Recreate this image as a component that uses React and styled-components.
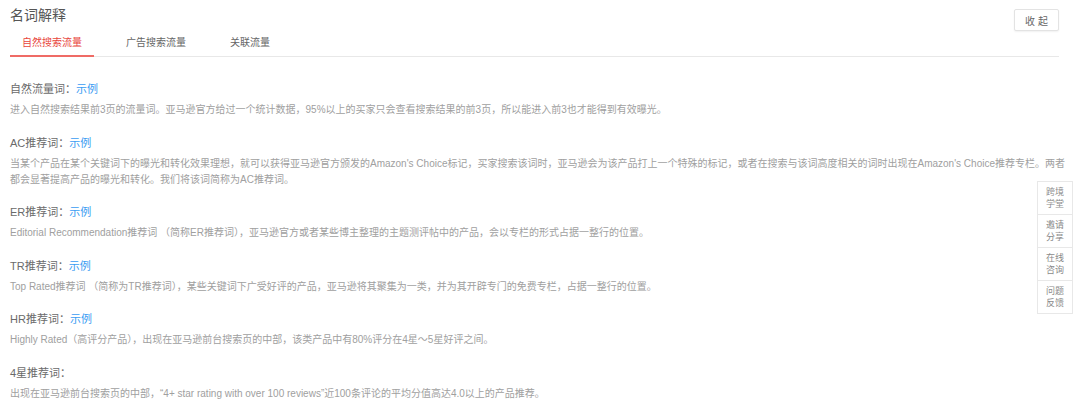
import styled, { createGlobalStyle } from "styled-components";

const GlobalStyle = createGlobalStyle`
  body {
    margin: 0;
    background: #ffffff;
    font-family: "Liberation Sans", "Noto Sans CJK SC", sans-serif;
  }
`;

const tabs = ["自然搜索流量", "广告搜索流量", "关联流量"];

const terms = [
  {
    name: "自然流量词：",
    example: true,
    text: "进入自然搜索结果前3页的流量词。亚马逊官方给过一个统计数据，95%以上的买家只会查看搜索结果的前3页，所以能进入前3也才能得到有效曝光。",
  },
  {
    name: "AC推荐词：",
    example: true,
    text: "当某个产品在某个关键词下的曝光和转化效果理想，就可以获得亚马逊官方颁发的Amazon's Choice标记，买家搜索该词时，亚马逊会为该产品打上一个特殊的标记，或者在搜索与该词高度相关的词时出现在Amazon's Choice推荐专栏。两者都会显著提高产品的曝光和转化。我们将该词简称为AC推荐词。",
  },
  {
    name: "ER推荐词：",
    example: true,
    text: "Editorial Recommendation推荐词 （简称ER推荐词），亚马逊官方或者某些博主整理的主题测评帖中的产品，会以专栏的形式占据一整行的位置。",
  },
  {
    name: "TR推荐词：",
    example: true,
    text: "Top Rated推荐词 （简称为TR推荐词），某些关键词下广受好评的产品，亚马逊将其聚集为一类，并为其开辟专门的免费专栏，占据一整行的位置。",
  },
  {
    name: "HR推荐词：",
    example: true,
    text: "Highly Rated（高评分产品），出现在亚马逊前台搜索页的中部，该类产品中有80%评分在4星～5星好评之间。",
  },
  {
    name: "4星推荐词：",
    example: false,
    text: "出现在亚马逊前台搜索页的中部，“4+ star rating with over 100 reviews”近100条评论的平均分值高达4.0以上的产品推荐。",
  },
];

const sideLinks = [
  ["跨境", "学堂"],
  ["邀请", "分享"],
  ["在线", "咨询"],
  ["问题", "反馈"],
];

export default function App() {
  return (
    <>
      <GlobalStyle />
      <Page>
        <Header>
          <Title>名词解释</Title>
          <FoldButton>收 起</FoldButton>
        </Header>
        <TabBar>
          {tabs.map((t, i) => (
            <Tab key={t} active={i === 0}>
              {t}
            </Tab>
          ))}
        </TabBar>
        <Content>
          {terms.map((term) => (
            <Term key={term.name}>
              <TermName>
                {term.name}
                {term.example && <Example>示例</Example>}
              </TermName>
              <TermText>{term.text}</TermText>
            </Term>
          ))}
        </Content>
      </Page>
      <SideBar>
        {sideLinks.map((l) => (
          <SideItem key={l[0]}>
            {l[0]}
            <br />
            {l[1]}
          </SideItem>
        ))}
      </SideBar>
    </>
  );
}

const Page = styled.div`
  padding: 5px 21px 0 10px;
`;

const Header = styled.div`
  display: flex;
  justify-content: space-between;
  align-items: flex-start;
`;

const Title = styled.h2`
  margin: 0;
  font-size: 14px;
  line-height: 20px;
  font-weight: normal;
  color: #555555;
`;

const FoldButton = styled.button`
  margin-top: 4px;
  width: 45px;
  height: 22px;
  padding: 0;
  background: #ffffff;
  border: 1px solid #e3e3e3;
  border-radius: 2px;
  box-shadow: 0 1px 2px rgba(0, 0, 0, 0.06);
  font-family: inherit;
  font-size: 10px;
  color: #666666;
  cursor: pointer;
`;

const TabBar = styled.div`
  display: flex;
  gap: 20px;
  border-bottom: 1px solid #e8e8e8;
`;

const Tab = styled.div`
  padding: 5px 12px 5px;
  margin-bottom: -1px;
  font-size: 10px;
  line-height: 14px;
  color: ${(props) => (props.active ? "#e8453c" : "#666666")};
  border-bottom: 2px solid
    ${(props) => (props.active ? "#ef6b65" : "transparent")};
`;

const Content = styled.div`
  padding-top: 24px;
  margin-right: -14px;
  display: flex;
  flex-direction: column;
  gap: 16.5px;
`;

const Term = styled.div``;

const TermName = styled.div`
  font-size: 11px;
  line-height: 16px;
  color: #6a6a6a;
  margin-bottom: 5px;
`;

const Example = styled.span`
  color: #3a9cf2;
  cursor: pointer;
`;

const TermText = styled.p`
  margin: 0;
  font-size: 10px;
  line-height: 16px;
  color: #a0a0a0;
`;

const SideBar = styled.div`
  position: fixed;
  top: 181px;
  left: 1037px;
  width: 34px;
  background: #ffffff;
  border: 1px solid #e8e8e8;
`;

const SideItem = styled.div`
  height: 32px;
  display: flex;
  align-items: center;
  justify-content: center;
  text-align: center;
  font-size: 9px;
  line-height: 12px;
  color: #8a8a8a;
  border-top: 1px solid #e8e8e8;

  &:first-child {
    border-top: none;
  }
`;
